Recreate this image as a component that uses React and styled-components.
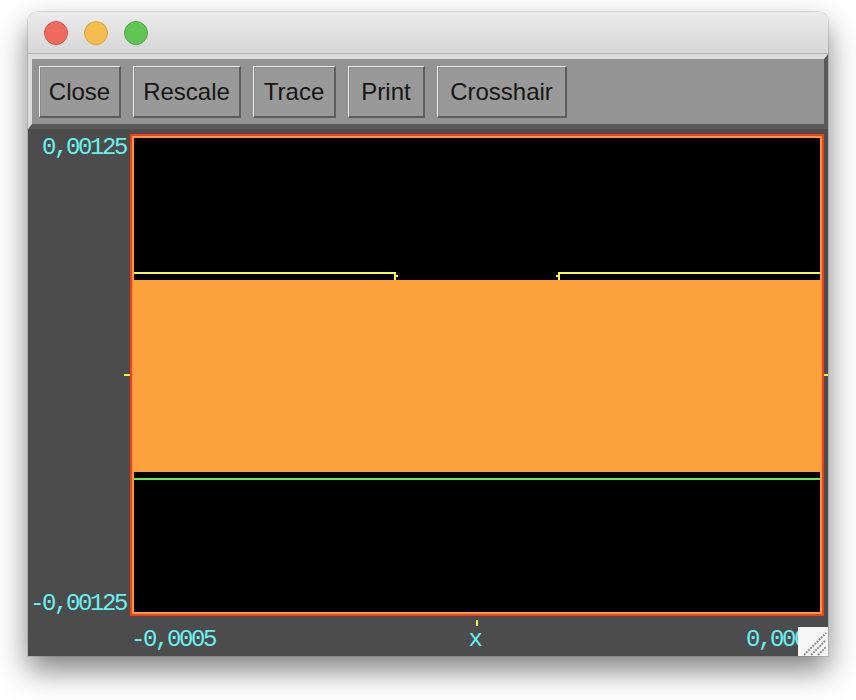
import React from 'react';
import styled, { createGlobalStyle } from 'styled-components';

const GlobalStyle = createGlobalStyle`
  html, body {
    margin: 0;
    padding: 0;
    background: #ffffff;
  }
`;

const Page = styled.div`
  width: 856px;
  height: 700px;
  padding: 12px 0 0 28px;
  box-sizing: border-box;
  overflow: hidden;
`;

const Window = styled.div`
  width: 800px;
  height: 644px;
  display: flex;
  flex-direction: column;
  border-radius: 10px 10px 0 0;
  overflow: hidden;
  box-shadow: 0 14px 30px rgba(0, 0, 0, 0.5), 0 0 0 1px rgba(0, 0, 0, 0.1);
`;

const TitleBar = styled.div`
  height: 42px;
  box-sizing: border-box;
  flex-shrink: 0;
  display: flex;
  align-items: center;
  gap: 16px;
  padding-left: 16px;
  background: linear-gradient(#ececec, #d6d6d6);
  border-bottom: 1px solid #b2b2b2;
`;

const Light = styled.span`
  width: 24px;
  height: 24px;
  box-sizing: border-box;
  border-radius: 50%;
  background: ${(p) => p.$color};
  border: 1px solid ${(p) => p.$edge};
`;

const Toolbar = styled.div`
  height: 75px;
  box-sizing: border-box;
  flex-shrink: 0;
  display: flex;
  align-items: flex-start;
  gap: 12px;
  padding: 7px 0 0 7px;
  background: #939393;
  border-top: 5px solid #dcdcdc;
  border-left: 4px solid #dcdcdc;
  border-right: 4px solid #5a5a5a;
  border-bottom: 5px solid #5a5a5a;
`;

const Button = styled.button`
  width: ${(p) => p.$w}px;
  height: 52px;
  padding: 0;
  margin: 0;
  box-sizing: border-box;
  background: #999999;
  border-style: solid;
  border-width: 1px 2px 2px 1px;
  border-color: #ececec #5e5e5e #5e5e5e #ececec;
  box-shadow: inset 1px 1px 0 #8a8a8a;
  font-family: "Liberation Sans", Arial, sans-serif;
  font-size: 24px;
  color: #161616;
  cursor: default;
`;

const Panel = styled.div`
  position: relative;
  flex: 1;
  display: grid;
  grid-template-columns: 102px 694px 4px;
  grid-template-rows: 5px 482px 40px;
  background: #4c4c4c;
`;

const AxisText = styled.span`
  font-family: "Liberation Mono", "DejaVu Sans Mono", monospace;
  font-size: 24px;
  line-height: 24px;
  letter-spacing: -2.4px;
  color: #6af0f0;
  white-space: nowrap;
  justify-self: ${(p) => p.$align || 'start'};
`;

const LeftAxis = styled.div`
  grid-column: 1;
  grid-row: 2;
  position: relative;
  display: flex;
  flex-direction: column;
  justify-content: space-between;
  align-items: flex-end;
  padding: 2px 4px 0 0;
`;

const RightEdge = styled.div`
  grid-column: 3;
  grid-row: 2;
  position: relative;
`;

const Tick = styled.span`
  position: absolute;
  background: #f4f44a;
  width: ${(p) => p.$w}px;
  height: ${(p) => p.$h}px;
  ${(p) => p.$pos}
`;

const PlotFrame = styled.div`
  grid-column: 2;
  grid-row: 2;
  border: 2px solid #f03e1f;
  display: flex;
`;

const PlotInner = styled.div`
  flex: 1;
  border: 2px solid #fb9a3a;
  background: #000;
  display: flex;
`;

const BottomAxis = styled.div`
  grid-column: 2;
  grid-row: 3;
  position: relative;
  display: grid;
  grid-template-columns: 1fr auto 1fr;
  align-items: baseline;
  padding: 12px 6px 0 1px;
`;

const Grip = styled.div`
  position: absolute;
  right: 0;
  bottom: 0;
  width: 30px;
  height: 29px;
  background: #f6f6f6;
  display: flex;
`;

const Trace = () => (
  <svg width="686" height="474" viewBox="0 0 686 474">
    <rect x="0" y="142" width="686" height="192" fill="#fca23c" />
    <rect x="0" y="340" width="686" height="2" fill="#66ee46" />
    <rect x="0" y="134" width="262" height="2" fill="#f8f84c" />
    <rect x="260" y="134" width="2" height="8" fill="#f8f84c" />
    <rect x="262" y="137" width="2" height="2" fill="#f8f84c" />
    <rect x="424" y="134" width="262" height="2" fill="#f8f84c" />
    <rect x="424" y="134" width="2" height="8" fill="#f8f84c" />
    <rect x="422" y="137" width="2" height="2" fill="#f8f84c" />
  </svg>
);

const buttons = [
  { label: 'Close', w: 82 },
  { label: 'Rescale', w: 108 },
  { label: 'Trace', w: 83 },
  { label: 'Print', w: 77 },
  { label: 'Crosshair', w: 130 },
];

const App = () => {
  return (
    <Page>
      <GlobalStyle />
      <Window>
        <TitleBar>
          <Light $color="#ee6a5f" $edge="#d75448" />
          <Light $color="#f5bd4f" $edge="#d9a23c" />
          <Light $color="#61c454" $edge="#4ea941" />
        </TitleBar>
        <Toolbar>
          {buttons.map((b) => (
            <Button key={b.label} $w={b.w}>{b.label}</Button>
          ))}
        </Toolbar>
        <Panel>
          <LeftAxis>
            <AxisText>0,00125</AxisText>
            <AxisText>-0,00125</AxisText>
            <Tick $w={6} $h={2} $pos="right: 0; top: 240px;" />
          </LeftAxis>
          <PlotFrame>
            <PlotInner>
              <Trace />
            </PlotInner>
          </PlotFrame>
          <RightEdge>
            <Tick $w={4} $h={2} $pos="left: 0; top: 240px;" />
          </RightEdge>
          <BottomAxis>
            <AxisText>-0,0005</AxisText>
            <AxisText $align="center">x</AxisText>
            <AxisText $align="end">0,0005</AxisText>
            <Tick $w={2} $h={6} $pos="left: 346px; top: 4px;" />
          </BottomAxis>
          <Grip>
            <svg width="30" height="29" viewBox="0 0 30 29">
              <g stroke="#8e8e8e" strokeWidth="2" strokeDasharray="2 1">
                <line x1="6" y1="28" x2="28" y2="6" />
                <line x1="13" y1="28" x2="28" y2="13" />
                <line x1="20" y1="28" x2="28" y2="20" />
              </g>
            </svg>
          </Grip>
        </Panel>
      </Window>
    </Page>
  );
};

export default App;
